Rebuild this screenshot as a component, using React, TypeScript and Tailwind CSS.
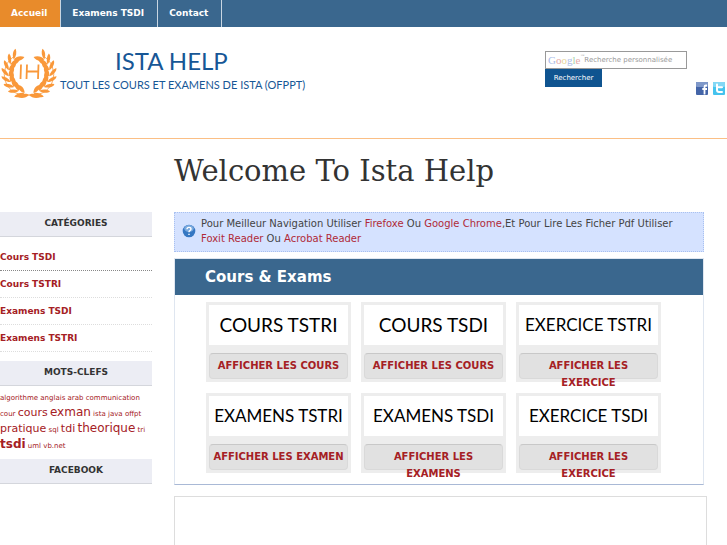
import React from 'react';

const navItems = [
  { label: 'Accueil', active: true },
  { label: 'Examens TSDI', active: false },
  { label: 'Contact', active: false },
];

const categories = ['Cours TSDI', 'Cours TSTRI', 'Examens TSDI', 'Examens TSTRI'];

const tags = [
  { label: 'algorithme', size: 'text-[7px]' },
  { label: 'anglais', size: 'text-[7px]' },
  { label: 'arab', size: 'text-[7px]' },
  { label: 'communication', size: 'text-[7px]' },
  { label: 'cour', size: 'text-[7px]' },
  { label: 'cours', size: 'text-[11px]' },
  { label: 'exman', size: 'text-[12px]' },
  { label: 'ista', size: 'text-[7px]' },
  { label: 'java', size: 'text-[7px]' },
  { label: 'offpt', size: 'text-[7px]' },
  { label: 'pratique', size: 'text-[11px]' },
  { label: 'sql', size: 'text-[7px]' },
  { label: 'tdi', size: 'text-[11px]' },
  { label: 'theorique', size: 'text-[12px]' },
  { label: 'tri', size: 'text-[7px]' },
  { label: 'tsdi', size: 'text-[12px] font-bold' },
  { label: 'uml', size: 'text-[7px]' },
  { label: 'vb.net', size: 'text-[7px]' },
];

const cards = [
  { title: 'COURS TSTRI', action: 'AFFICHER LES COURS', size: 'text-[19px]' },
  { title: 'COURS TSDI', action: 'AFFICHER LES COURS', size: 'text-[19px]' },
  { title: 'EXERCICE TSTRI', action: 'AFFICHER LES EXERCICE', size: 'text-[17px]' },
  { title: 'EXAMENS TSTRI', action: 'AFFICHER LES EXAMEN', size: 'text-[17px]' },
  { title: 'EXAMENS TSDI', action: 'AFFICHER LES EXAMENS', size: 'text-[17px]' },
  { title: 'EXERCICE TSDI', action: 'AFFICHER LES EXERCICE', size: 'text-[17px]' },
];

// angles of the leaf pairs on the right branch, from the bottom to the tip
const leafAngles = [66, 49, 32, 15, -2, -19, -36, -53];

function Branch() {
  return (
    <g>
      <path d="M29 48 A21 21 0 0 0 43 9" fill="none" stroke="#f9983a" strokeWidth="0.8" />
      {leafAngles.map((angle) => (
        <g key={angle} transform={`rotate(${angle} 29 26) translate(49 26)`}>
          <path d="M0 4 C1 0 4 -3 7.5 -4 C8 -1 4.5 3 0 4Z" />
          <path d="M0 4 C1 0 -1 -4 -4.5 -6 C-6 -2 -4 2.5 0 4Z" />
        </g>
      ))}
      <path d="M29 48 C32 45.5 37 47 41 50 C36 52 32 51 29 48Z" />
    </g>
  );
}

function Logo() {
  return (
    <a href="#" className="flex text-[#175796]">
      <svg width="58" height="52" viewBox="0 0 58 52" fill="#f9983a" aria-hidden="true">
        <Branch />
        <g transform="translate(58 0) scale(-1 1)">
          <Branch />
        </g>
        <path
          d="M21 17.5 L20.5 32 M27 17.5 L26.5 32 M38.5 17.5 L38 32 M27 24.5 H38"
          fill="none"
          stroke="#f9983a"
          strokeWidth="1.8"
        />
      </svg>
      <span className="ml-[2px] flex flex-col font-[Lato,sans-serif] whitespace-nowrap">
        <span className="pl-[55px] text-[24px] leading-7">ISTA HELP</span>
        <span className="text-[11px] leading-5">TOUT LES COURS ET EXAMENS DE ISTA (OFPPT)</span>
      </span>
    </a>
  );
}

function SideTitle({ children }: { children: React.ReactNode }) {
  return (
    <h2 className="h-[25px] border-b border-[#d4d6dc] bg-[#ecedf4] text-center text-[9px] leading-[22px] font-bold text-[#333]">
      {children}
    </h2>
  );
}

export default function App() {
  return (
    <div className="min-h-screen overflow-hidden bg-white font-['DejaVu_Sans',sans-serif] text-[#444]">
      <nav className="flex h-[27px] bg-[#3a678e] text-[9px] leading-[27px] font-bold text-white">
        {navItems.map((item) => (
          <a
            key={item.label}
            href="#"
            className={
              item.active
                ? 'border-r border-[#c9d6e2] bg-[#e88b2b] pr-[13px] pl-[11px]'
                : 'border-r border-[#c9d6e2] pr-[13px] pl-[11px]'
            }
          >
            {item.label}
          </a>
        ))}
      </nav>

      <header className="flex h-28 items-start border-b border-[#fbbf85] pt-5">
        <Logo />
        <div className="ml-auto flex items-start">
          <form className="mt-1 mr-[9px] w-[142px]">
            <label className="flex h-[18px] items-center border border-[#999] pl-[2px]">
              <span className="flex font-['Liberation_Serif',serif] text-[11px] leading-4">
                <span className="text-[#a9bbe8]">G</span>
                <span className="text-[#e5aaaa]">o</span>
                <span className="text-[#e8d69a]">o</span>
                <span className="text-[#a9bbe8]">g</span>
                <span className="text-[#a9d3ab]">l</span>
                <span className="text-[#e5aaaa]">e</span>
                <span className="text-[4px] leading-2 text-[#aaa]">™</span>
              </span>
              <input
                type="text"
                aria-label="Recherche personnalisée"
                placeholder="Recherche personnalisée"
                className="min-w-0 flex-1 text-[7px] outline-none placeholder:text-[#999]"
              />
            </label>
            <button
              type="button"
              className="block h-[18px] w-[57px] bg-[#0f5490] text-[7px] font-normal text-white"
            >
              Rechercher
            </button>
          </form>
          <div className="mt-[35px] mr-[2px] flex gap-[5px]">
            <a href="#" aria-label="Facebook">
              <svg width="12" height="13" viewBox="0 0 12 13">
                <rect width="12" height="13" rx="1" fill="#4465a8" />
                <rect width="12" height="5" rx="1" fill="#7f98c9" />
                <path d="M11 3.5H9.8Q8.5 3.5 8.5 5V12.5M6.3 7H11" stroke="#fff" strokeWidth="1.8" fill="none" />
              </svg>
            </a>
            <a href="#" aria-label="Twitter">
              <svg width="12" height="13" viewBox="0 0 12 13">
                <rect width="12" height="13" rx="1" fill="#45c3ee" />
                <rect width="12" height="5" rx="1" fill="#83d8f5" />
                <path d="M4 2.5V8Q4 10 6 10H9M4 5.2H9" stroke="#fff" strokeWidth="2" strokeLinecap="round" fill="none" />
              </svg>
            </a>
          </div>
        </div>
      </header>

      <div className="flex gap-[22px]">
        <aside className="w-[152px] shrink-0 pt-[73px]">
          <SideTitle>CATÉGORIES</SideTitle>
          <ul className="pt-[7px] text-[9px] font-bold text-[#a52024]">
            {categories.map((name, i) => (
              <li
                key={name}
                className={
                  i === 0
                    ? 'border-b border-dotted border-[#888]'
                    : 'border-b border-dotted border-[#ddd]'
                }
              >
                <a href="#" className="block leading-[26px]">
                  {name}
                </a>
              </li>
            ))}
          </ul>
          <div className="mt-[9px]">
            <SideTitle>MOTS-CLEFS</SideTitle>
            <div className="pt-[2px] pb-[7px] text-[12px] leading-4 text-[#a52024]">
              {tags.map((tag) => (
                <React.Fragment key={tag.label}>
                  <a href="#" className={`leading-none ${tag.size}`}>
                    {tag.label}
                  </a>
                  <span className="text-[7px] leading-none"> </span>
                </React.Fragment>
              ))}
            </div>
          </div>
          <SideTitle>FACEBOOK</SideTitle>
        </aside>

        <main className="mr-5 min-w-0 flex-1">
          <h1 className="pt-3 font-['DejaVu_Serif',serif] text-[29px] leading-10 text-[#333]">
            Welcome To Ista Help
          </h1>

          <div className="mt-[21px] mr-[3px] flex h-10 items-center gap-[5px] border border-dotted border-[#a9c1f0] bg-[#d5e2ff] pr-4 pb-[2px] pl-[7px]">
            <svg width="14" height="14" viewBox="0 0 14 14" className="shrink-0" aria-hidden="true">
              <circle cx="7" cy="7" r="6.3" fill="#3577c2" />
              <ellipse cx="7" cy="4.5" rx="4.8" ry="3.5" fill="#79a9df" />
              <path d="M5 5.2Q5 3.4 7 3.4Q9 3.4 9 5Q9 6 7.8 6.6Q7 7 7 8.2M7 9.7V11" stroke="#fff" strokeWidth="1.4" fill="none" />
            </svg>
            <p className="text-[10px] leading-[15px]">
              Pour Meilleur Navigation Utiliser{' '}
              <a href="#" className="text-[#b02a38]">Firefoxe</a> Ou{' '}
              <a href="#" className="text-[#b02a38]">Google Chrome</a>,Et Pour Lire Les Ficher Pdf Utiliser{' '}
              <a href="#" className="inline-block text-[#b02a38]">Foxit Reader</a> Ou{' '}
              <a href="#" className="text-[#b02a38]">Acrobat Reader</a>
            </p>
          </div>

          <section className="mt-[6px] mr-[3px] border border-[#dfe6f0] border-b-[#a9b9d6]">
            <h2 className="bg-[#3a678e] pl-[30px] text-[15px] leading-9 font-bold text-white">
              Cours &amp; Exams
            </h2>
            <div className="flex flex-wrap gap-x-[10px] gap-y-[11px] pt-[7px] pb-[11px] pl-[31px]">
              {cards.map((card) => (
                <div key={card.title} className="h-20 w-[145px] bg-[#ededed] p-[3px]">
                  <div
                    className={`flex h-10 items-center justify-center bg-white font-[Lato,sans-serif] whitespace-nowrap text-black ${card.size}`}
                  >
                    {card.title}
                  </div>
                  <a
                    href="#"
                    className="mt-2 block h-[26px] rounded-sm border border-t-[#c8c8c8] border-[#d9d9d9] bg-[#e1e1e1] px-[3px] pt-[3px] text-center text-[10px] leading-[17px] font-bold text-[#a52024]"
                  >
                    {card.action}
                  </a>
                </div>
              ))}
            </div>
          </section>

          <div className="mt-[11px] h-48 border border-[#ddd]" />
        </main>
      </div>
    </div>
  );
}
